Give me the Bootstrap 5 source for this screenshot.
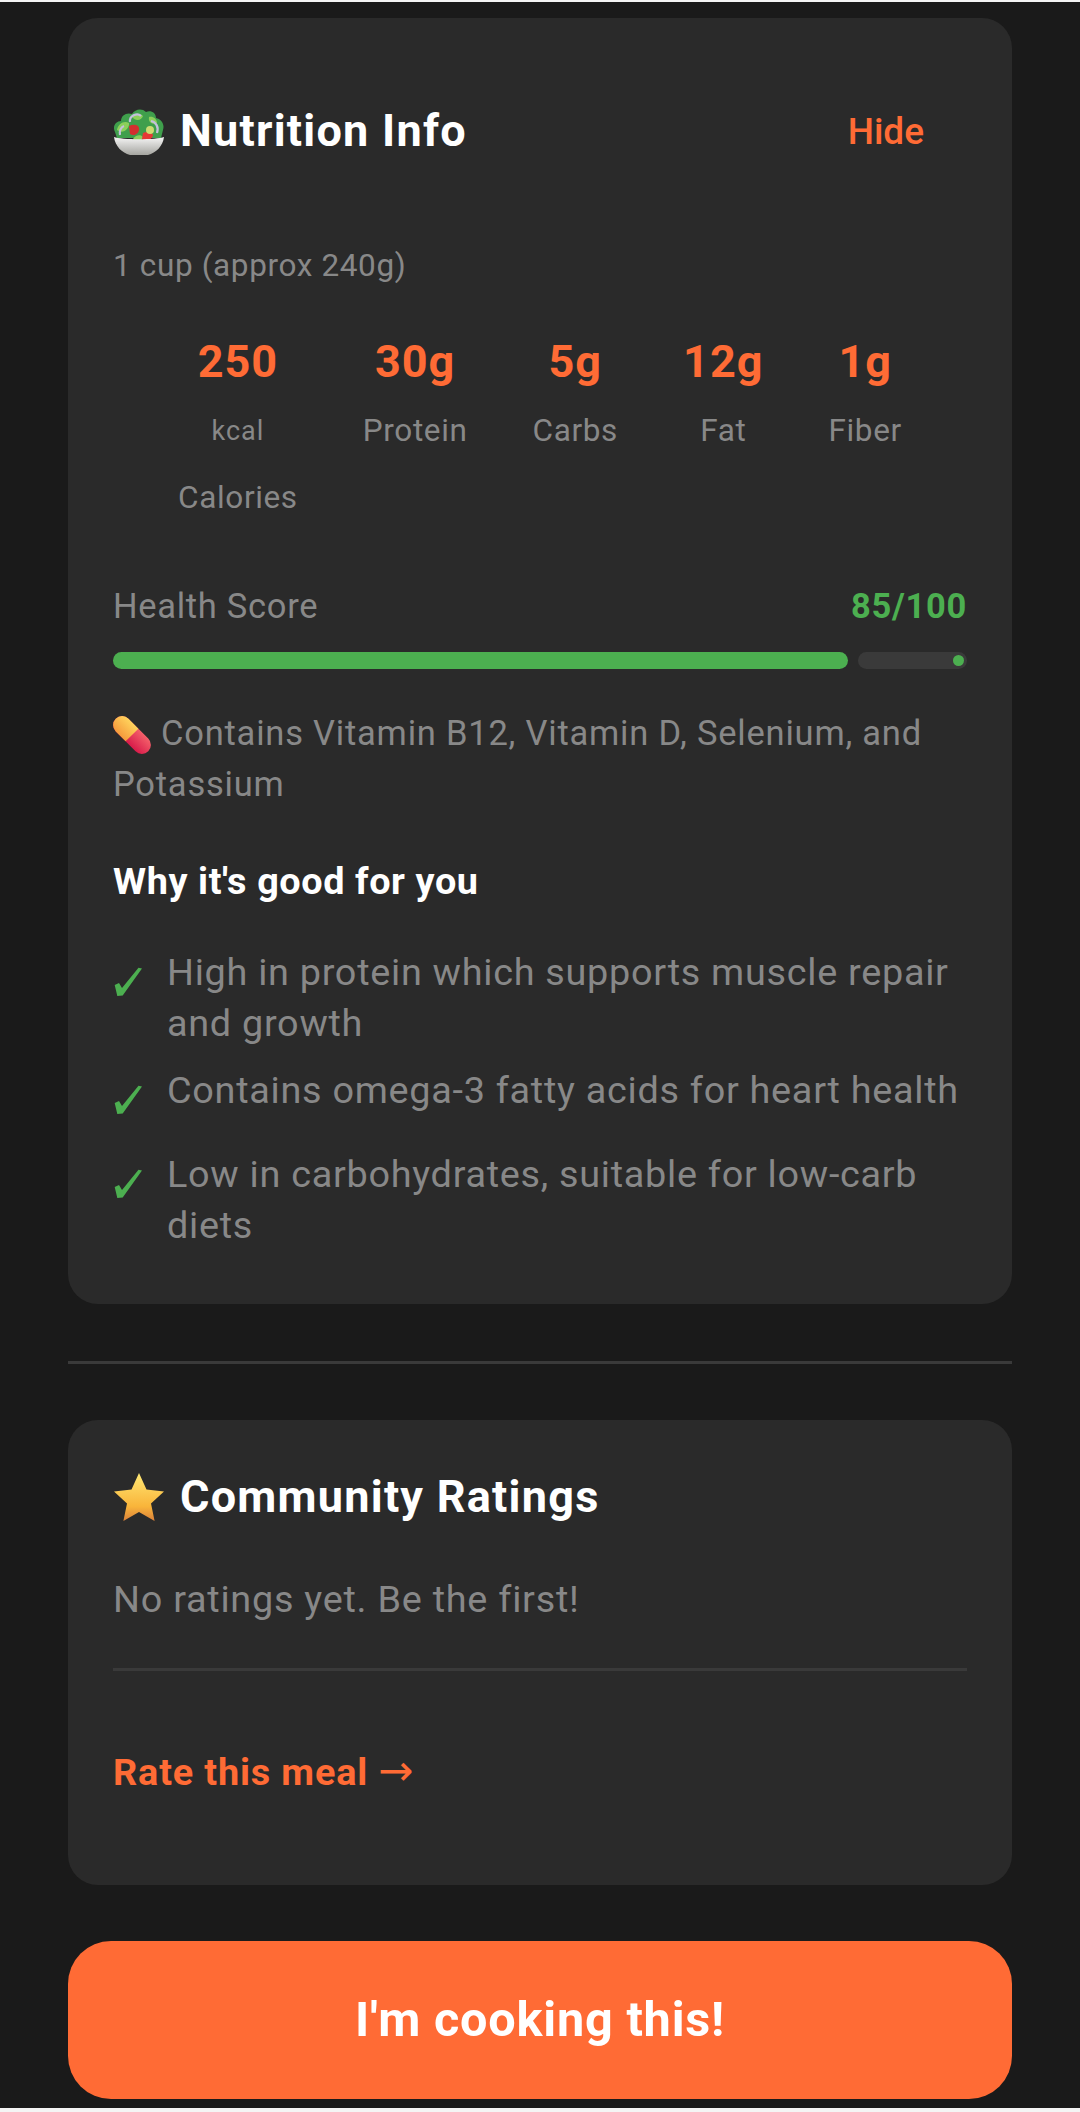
<!DOCTYPE html>
<html lang="en">
<head>
    <meta charset="UTF-8">
    <meta name="viewport" content="width=device-width, initial-scale=1.0">
    <title>Nutrition Info</title>
    <link href="https://cdn.jsdelivr.net/npm/bootstrap@5.3.0/dist/css/bootstrap.min.css" rel="stylesheet">
    <style>
        body {
            background-color: #1a1a1a;
            font-family: Roboto, "Liberation Sans", sans-serif;
            color: #888;
            padding: 16px 68px 0;
            height: 2112px;
            overflow: hidden;
            border-top: 2px solid #f4f4f4;
            border-bottom: 4px solid #f4f4f4;
        }
        .info-panel {
            background: #2a2a2a;
            border-radius: 30px;
            padding: 0 45px;
        }
        .nutrition-panel { padding-bottom: 53px; }
        .panel-title {
            color: #fff;
            font-size: 45px;
            font-weight: 700;
            letter-spacing: 1.25px;
            line-height: 60px;
            margin: 0;
        }
        .head-gap { gap: 15px; }
        .emoji-svg { width: 52px; height: 50px; flex: none; }
        .hide-link { color: #ff6b35; font-size: 37px; font-weight: 500; padding-right: 43px; line-height: 60px; position: relative; top: 1px; }
        .nutri-head { padding-top: 83px; }
        .serving { font-size: 31.5px; letter-spacing: 0.63px; line-height: 50px; margin-top: 80px; }
        .nutri-row { margin-top: 46px; }
        .nutri-col { text-align: center; }
        .nutri-val { color: #ff6b35; font-size: 45px; font-weight: 700; letter-spacing: 1px; line-height: 50px; }
        .nutri-lbl { font-size: 31.5px; letter-spacing: 0.63px; line-height: 50px; margin-top: 19px; }
        .nutri-unit { font-size: 27px; letter-spacing: 1px; line-height: 50px; margin-top: 19px; }
        .nutri-lbl2 { font-size: 31.5px; letter-spacing: 0.63px; line-height: 50px; margin-top: 17px; }
        .score-row { margin-top: 58px; font-size: 34.5px; letter-spacing: 0.7px; line-height: 50px; }
        .score-num { color: #4caf50; font-weight: 700; letter-spacing: 0.7px; }
        .score-bars { margin-top: 21px; gap: 10px; height: 17px; }
        .score-fill { width: 735px; background: #4caf50; border-radius: 9px; }
        .score-track { flex: 1; background: #3a3a3a; border-radius: 9px; position: relative; }
        .score-dot { position: absolute; right: 3px; top: 3px; width: 11px; height: 11px; border-radius: 50%; background: #4caf50; }
        .vitamins { margin-top: 39px; font-size: 34.5px; letter-spacing: 0.78px; line-height: 51px; }
        .vitamins svg { width: 38px; height: 38px; vertical-align: -9px; margin-right: 10px; }
        .why-title { color: #fff; font-size: 37.8px; font-weight: 700; letter-spacing: 0.6px; line-height: 50px; margin: 46px 0 0; }
        .why-list { list-style: none; padding: 0; margin: 41px 0 0; }
        .why-item { display: flex; font-size: 37.8px; letter-spacing: 0.72px; line-height: 51px; }
        .why-item + .why-item { margin-top: 16px; }
        .why-item:last-child { margin-top: 33px; }
        .why-check { width: 28px; height: 29px; flex: none; margin: 20px 25px 0 1px; }
        .sep { height: 3px; background: #3a3a3a; margin: 57px 0 56px; }
        .ratings-panel { padding-top: 47px; height: 465px; }
        .no-rate { font-size: 37.8px; letter-spacing: 0.75px; line-height: 50px; margin-top: 47px; }
        .thin-sep { height: 3px; background: #3a3a3a; margin-top: 44px; }
        .rate-link { color: #ff6b35; font-size: 37.8px; font-weight: 700; letter-spacing: 0.85px; line-height: 50px; margin-top: 75px; }
        .rate-arrow { font-family: "DejaVu Sans", sans-serif; font-size: 42px; font-weight: 400; letter-spacing: 0; }
        .cook-btn {
            display: block; width: 100%; height: 158px; margin-top: 56px;
            background: #ff6b35; color: #fff; border: 0; border-radius: 43px;
            font-size: 48.6px; font-weight: 700; letter-spacing: 0.8px;
        }
    </style>
</head>
<body>
    <div class="info-panel nutrition-panel">
        <div class="nutri-head d-flex align-items-center justify-content-between">
            <div class="d-flex align-items-center head-gap">
                <svg class="emoji-svg" viewBox="0 0 52 50">
                    <defs><linearGradient id="bowlGrad" x1="0" y1="0" x2="0" y2="1"><stop offset="0" stop-color="#f5f5f5"/><stop offset="1" stop-color="#a5a5a0"/></linearGradient></defs>
                    <path d="M2 26c-3-6 1-11 6-11 0-6 6-9 11-7 3-5 10-6 14-2 5-2 10 1 10 6 5 1 9 6 7 12l-2 8H4z" fill="#3f9f4c"/>
                    <path d="M4 24c1-6 7-10 12-7 1 5-6 12-12 7zM19 11c3-4 8-4 11-1-1 4-7 6-11 1zM36 11c4-1 8 2 8 6-4 2-9 0-8-6zM20 33c2-4 8-5 10-2 0 4-8 6-10 2z" fill="#8ccf5a"/>
                    <path d="M16 20c4-2 9-2 10 2 1 5-5 9-9 6z" fill="#d32f2f"/>
                    <path d="M30 27c4-2 9-1 10 2 0 4-8 8-11 4z" fill="#e53935"/>
                    <circle cx="37" cy="24" r="4" fill="#cddc71"/>
                    <path d="M17 16c-1-6 7-10 11-6M7 29c-1-4 1-8 4-9M38 15c5 1 8 6 6 12" fill="none" stroke="#c4c0dc" stroke-width="2.200"/>
                    <path d="M1 31c7 3 43 3 50 0-1 9-8 16-16 18H17C9 47 2 40 1 31z" fill="url(#bowlGrad)"/>
                </svg>
                <h2 class="panel-title">Nutrition Info</h2>
            </div>
            <span class="hide-link">Hide</span>
        </div>
        <div class="serving">1 cup (approx 240g)</div>
        <div class="nutri-row d-flex justify-content-evenly">
            <div class="nutri-col"><div class="nutri-val">250</div><div class="nutri-unit">kcal</div><div class="nutri-lbl2">Calories</div></div>
            <div class="nutri-col"><div class="nutri-val">30g</div><div class="nutri-lbl">Protein</div></div>
            <div class="nutri-col"><div class="nutri-val">5g</div><div class="nutri-lbl">Carbs</div></div>
            <div class="nutri-col"><div class="nutri-val">12g</div><div class="nutri-lbl">Fat</div></div>
            <div class="nutri-col"><div class="nutri-val">1g</div><div class="nutri-lbl">Fiber</div></div>
        </div>
        <div class="score-row d-flex justify-content-between"><span>Health Score</span><span class="score-num">85/100</span></div>
        <div class="score-bars d-flex">
            <div class="score-fill"></div>
            <div class="score-track"><div class="score-dot"></div></div>
        </div>
        <div class="vitamins">
            <svg viewBox="0 0 38 38">
                <defs>
                    <linearGradient id="pillTop" x1="0" y1="0" x2="0" y2="1"><stop offset="0" stop-color="#ffd35c"/><stop offset="1" stop-color="#f59a3c"/></linearGradient>
                    <linearGradient id="pillBot" x1="0" y1="0" x2="0" y2="1"><stop offset="0" stop-color="#f4606a"/><stop offset="1" stop-color="#d81b4a"/></linearGradient>
                </defs>
                <g transform="rotate(45 19 19)">
                    <rect x="-4" y="10" width="46" height="18" rx="9" fill="url(#pillBot)"/>
                    <path d="M19 10H5a9 9 0 0 0 0 18H19z" fill="url(#pillTop)"/>
                </g>
            </svg>Contains Vitamin B12, Vitamin D, Selenium, and Potassium
        </div>
        <h3 class="why-title">Why it's good for you</h3>
        <ul class="why-list">
            <li class="why-item"><svg class="why-check" viewBox="0 0 28 29"><path d="M0.700 18L5 16 8 21 24.500 0.700 28 1.500 8.700 28.500 3.300 29z" fill="#4caf50"/></svg><span>High in protein which supports muscle repair and growth</span></li>
            <li class="why-item"><svg class="why-check" viewBox="0 0 28 29"><path d="M0.700 18L5 16 8 21 24.500 0.700 28 1.500 8.700 28.500 3.300 29z" fill="#4caf50"/></svg><span>Contains omega-3 fatty acids for heart health</span></li>
            <li class="why-item"><svg class="why-check" viewBox="0 0 28 29"><path d="M0.700 18L5 16 8 21 24.500 0.700 28 1.500 8.700 28.500 3.300 29z" fill="#4caf50"/></svg><span>Low in carbohydrates, suitable for low-carb diets</span></li>
        </ul>
    </div>
    <div class="sep"></div>
    <div class="info-panel ratings-panel">
        <div class="d-flex align-items-center head-gap">
            <svg class="emoji-svg" viewBox="0 0 50 50">
                <defs><linearGradient id="starGrad" x1="0" y1="0" x2="0" y2="1"><stop offset="0" stop-color="#ffe874"/><stop offset="0.700" stop-color="#f9b43a"/><stop offset="1" stop-color="#d9803a"/></linearGradient></defs>
                <path d="M25 1l7.500 16.500 17.500 2-13 12 3.600 17.500L25 40l-15.600 9L13 31.500 0 19.500l17.500-2z" fill="url(#starGrad)"/>
            </svg>
            <h2 class="panel-title">Community Ratings</h2>
        </div>
        <div class="no-rate">No ratings yet. Be the first!</div>
        <div class="thin-sep"></div>
        <div class="rate-link">Rate this meal <span class="rate-arrow">→</span></div>
    </div>
    <button class="cook-btn">I'm cooking this!</button>
</body>
</html>
